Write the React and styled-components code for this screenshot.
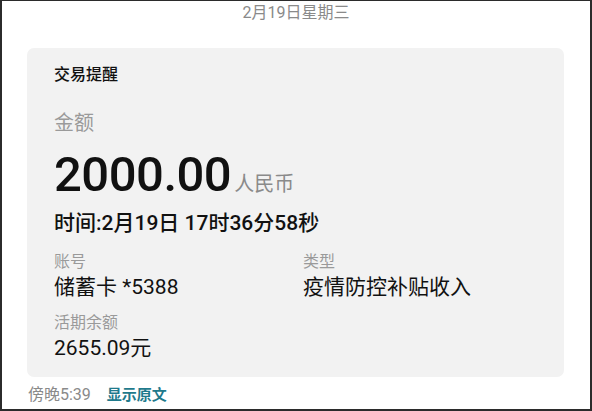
import React from 'react'
import styled, { createGlobalStyle } from 'styled-components'

const GlobalStyle = createGlobalStyle`
  html, body {
    margin: 0;
    padding: 0;
    background: #fff;
  }
  body {
    font-family: Roboto, "Noto Sans CJK SC", sans-serif;
  }
`

const App = () => {
  return (
    <Screen>
      <GlobalStyle />
      <DateLine>2月19日星期三</DateLine>
      <Card>
        <CardTitle>交易提醒</CardTitle>
        <Label size={20}>金额</Label>
        <AmountRow>
          <Amount>2000.00</Amount>
          <Currency>人民币</Currency>
        </AmountRow>
        <TimeLine>时间:2月19日 17时36分58秒</TimeLine>
        <Fields>
          <Field>
            <Label>账号</Label>
            <Value>储蓄卡 *5388</Value>
          </Field>
          <Field>
            <Label>类型</Label>
            <Value>疫情防控补贴收入</Value>
          </Field>
          <Field>
            <Label>活期余额</Label>
            <Value>2655.09元</Value>
          </Field>
        </Fields>
      </Card>
      <Footer>
        <Stamp>傍晚5:39</Stamp>
        <Original>显示原文</Original>
      </Footer>
    </Screen>
  )
}

const Screen = styled.div`
  box-sizing: border-box;
  width: 592px;
  height: 411px;
  overflow: hidden;
  border: 2px solid #2b2b2b;
  border-top-width: 1px;
  display: flex;
  flex-direction: column;
`

const DateLine = styled.div`
  text-align: center;
  color: #8a8a8a;
  font-size: 16px;
  line-height: 22px;
  margin-top: 1px;
`

const Card = styled.div`
  margin: 24px 0 0 25px;
  width: 537px;
  height: 329px;
  box-sizing: border-box;
  background: #f2f2f2;
  border-radius: 7px;
  padding: 16px 27px 0;
  display: flex;
  flex-direction: column;
`

const CardTitle = styled.div`
  font-size: 16px;
  font-weight: 500;
  color: #111;
  line-height: 22px;
`

const Label = styled.div`
  font-size: ${p => p.size || 16}px;
  color: #9a9a9a;
  line-height: ${p => (p.size ? 28 : 22)}px;
  margin-top: ${p => (p.size ? 23 : 0)}px;
`

const AmountRow = styled.div`
  display: flex;
  align-items: baseline;
  margin-top: 10px;
`

const Amount = styled.div`
  font-size: 49px;
  font-weight: 500;
  color: #111;
  line-height: 56px;
  letter-spacing: -0.5px;
`

const Currency = styled.div`
  font-size: 20px;
  color: #8a8a8a;
  margin-left: 3px;
`

const TimeLine = styled.div`
  font-size: 21px;
  font-weight: 500;
  color: #111;
  line-height: 28px;
  margin-top: 6px;
`

const Fields = styled.div`
  display: grid;
  grid-template-columns: 249px 1fr;
  row-gap: 11px;
  margin-top: 14px;
`

const Field = styled.div`
  display: flex;
  flex-direction: column;
  gap: 1px;
`

const Value = styled.div`
  font-size: 21px;
  color: #111;
  line-height: 27px;
`

const Footer = styled.div`
  display: flex;
  align-items: baseline;
  gap: 16px;
  margin: 7px 0 0 26px;
  font-size: 16px;
  line-height: 22px;
`

const Stamp = styled.span`
  color: #8a8a8a;
`

const Original = styled.span`
  color: #1f7a8c;
  font-size: 15px;
  font-weight: 700;
`

export default App
